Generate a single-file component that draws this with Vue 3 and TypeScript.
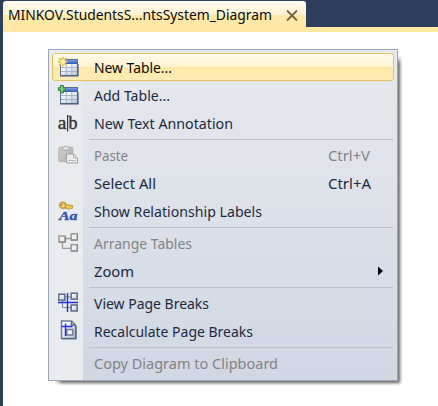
<script setup lang="ts">
type Icon = 'new' | 'add' | 'text' | 'paste' | 'labels' | 'arrange' | 'breaks' | 'recalc'
interface Item {
  label: string
  icon?: Icon
  shortcut?: string
  disabled?: boolean
  active?: boolean
  submenu?: boolean
  width: number
}

const groups: Item[][] = [
  [
    { label: 'New Table...', icon: 'new', active: true, width: 78 },
    { label: 'Add Table...', icon: 'add', width: 76 },
    { label: 'New Text Annotation', icon: 'text', width: 139 },
  ],
  [
    { label: 'Paste', icon: 'paste', shortcut: 'Ctrl+V', disabled: true, width: 34 },
    { label: 'Select All', shortcut: 'Ctrl+A', width: 62 },
    { label: 'Show Relationship Labels', icon: 'labels', width: 168 },
  ],
  [
    { label: 'Arrange Tables', icon: 'arrange', disabled: true, width: 98 },
    { label: 'Zoom', submenu: true, width: 40 },
  ],
  [
    { label: 'View Page Breaks', icon: 'breaks', width: 115 },
    { label: 'Recalculate Page Breaks', icon: 'recalc', width: 159 },
  ],
  [{ label: 'Copy Diagram to Clipboard', disabled: true, width: 184 }],
]
</script>

<template>
  <div class="window">
    <header class="tabs">
      <div class="tab">
        <svg class="title" width="268" height="26">
          <text x="0" y="19" textLength="264" lengthAdjust="spacingAndGlyphs">MINKOV.StudentsS...ntsSystem_Diagram</text>
        </svg>
        <svg class="close" width="12" height="11" viewBox="0 0 12 11">
          <path d="M1 .5 11 10.5M11 .5 1 10.5" stroke="#75633d" stroke-width="1.9" />
        </svg>
      </div>
    </header>
    <main class="canvas">
      <svg class="defs" width="0" height="0">
        <defs>
          <linearGradient id="cell" x1="0" y1="0" x2="1" y2="1">
            <stop offset="0.2" stop-color="#fff" /><stop offset="1" stop-color="#b4c3da" />
          </linearGradient>
          <linearGradient id="head" x1="0" y1="0" x2="0" y2="1">
            <stop offset="0" stop-color="#7ba0ec" /><stop offset="1" stop-color="#3155b7" />
          </linearGradient>
          <linearGradient id="gray" x1="0" y1="0" x2="1" y2="1">
            <stop offset="0" stop-color="#d6d6d6" /><stop offset="1" stop-color="#a9a9a9" />
          </linearGradient>
        </defs>
      </svg>
      <div class="menu">
        <div v-for="(group, g) in groups" :key="g" class="group">
          <div
            v-for="item in group"
            :key="item.label"
            class="item"
            :class="{ active: item.active, disabled: item.disabled }"
          >
            <span class="icon">
              <svg v-if="item.icon" width="20" height="20" viewBox="0 0 20 20" fill="none">
                <template v-if="item.icon === 'new' || item.icon === 'add'">
                  <rect x="2.5" y="2.5" width="17" height="16" fill="#fff" stroke="#5b6c91" />
                  <rect x="3" y="3" width="16" height="4" fill="url(#head)" />
                  <rect x="3" y="7" width="16" height="11" fill="url(#cell)" />
                  <path d="M3 10.5h16M3 14.5h16M8.3 7v11M13.8 7v11" stroke="#a7b4cb" />
                  <path d="M2 19h18V7" stroke="#48587c" stroke-width="1.2" />
                  <template v-if="item.icon === 'new'">
                    <path d="M4.8 0v9.6M0 4.8h9.6M1.2 1.2l7.2 7.2M8.4 1.2 1.2 8.4" stroke="#e6bd4b" stroke-width="1.8" />
                    <circle cx="4.8" cy="4.8" r="2.5" fill="#fff1a6" />
                  </template>
                  <template v-else>
                    <path d="M2.5.5h3v2.2h2.2v3H5.5V8h-3V5.7H.4v-3h2.1z" fill="#65b96e" stroke="#358345" />
                    <path d="M4 1.5v5" stroke="#9ad49e" />
                  </template>
                </template>
                <template v-else-if="item.icon === 'text'">
                  <text class="ab" x="-.3" y="16" textLength="8.6" lengthAdjust="spacingAndGlyphs">a</text>
                  <path d="M9.6 2v16.5" stroke="#333" stroke-width="1.2" />
                  <text class="ab" x="10.5" y="16" textLength="9" lengthAdjust="spacingAndGlyphs">b</text>
                </template>
                <template v-else-if="item.icon === 'paste'">
                  <rect x=".8" y="2.2" width="14" height="14.5" rx="1" fill="url(#gray)" stroke="#b2b2b2" />
                  <path d="M4 5V3l2-.4Q7.7-.6 9.4 2.6l2.3.4v2z" fill="#ececec" stroke="#a5a5a5" />
                  <path d="M8.5 9h7l4 4v5h-11z" fill="#ededed" stroke="#a1a1a1" />
                  <path d="M15.5 9v4h4M10.5 15.5h7" stroke="#b2b2b2" />
                </template>
                <template v-else-if="item.icon === 'labels'">
                  <circle cx="4.8" cy="4.3" r="3" fill="#f9df82" stroke="#cda141" stroke-width="1.8" />
                  <path d="M7.5 3.5 14.8 4.6 14.2 7.6 12.4 7.2 11 8.6 9.7 7.4 7 7z" fill="#efc85a" stroke="#bf9339" />
                  <circle cx="3.8" cy="3.8" r="1" fill="#b88a34" />
                  <text class="aa" x="1" y="19" textLength="18.5" lengthAdjust="spacingAndGlyphs">Aa</text>
                </template>
                <template v-else-if="item.icon === 'arrange'">
                  <path d="M7 5.5h6M4.5 9v6.3H13" stroke="#9b9b9b" stroke-width="1.3" />
                  <g fill="#eee" stroke="#9a9a9a" stroke-width="1.5">
                    <rect x="1" y="3" width="6" height="6" />
                    <rect x="13.2" y=".8" width="6" height="6.2" />
                    <rect x="13.2" y="11.7" width="6" height="6.2" />
                  </g>
                  <path d="M1 9.2h6.4V3M13 7.2h6.5V.8M13 18.1h6.5v-6.4" stroke="#848484" />
                </template>
                <template v-else-if="item.icon === 'breaks'">
                  <path d="M7 4h6M4.5 8v6.5H13" stroke="#7f8a9d" />
                  <g fill="url(#cell)" stroke="#64738d" stroke-width="1.6">
                    <rect x=".8" y="1.2" width="6" height="6" />
                    <rect x="13.2" y=".2" width="6" height="6" />
                    <rect x="13.2" y="12" width="6" height="6" />
                  </g>
                  <path d="M0 9.5h20M9.5 0v19" stroke="#2429e6" stroke-width="1.4" />
                </template>
                <template v-else>
                  <path d="M3.5 0h10l4 4v13.5h-14z" fill="url(#cell)" stroke="#6d7d9a" stroke-width="1.5" />
                  <path d="M13.5 0v4h4M4 17.6h14V5" stroke="#526486" stroke-width="1.3" />
                  <rect x="8.7" y="8.5" width="6" height="5.5" fill="#f4f6fb" stroke="#72819b" stroke-width="1.6" />
                  <path d="M4 5.5h10.5M7.5 2.5V15" stroke="#2429e6" stroke-width="1.4" />
                </template>
              </svg>
            </span>
            <svg class="label" width="200" height="26">
              <text x="1" y="19" :textLength="item.width" lengthAdjust="spacingAndGlyphs">{{ item.label }}</text>
            </svg>
            <svg v-if="item.shortcut" class="shortcut" width="46" height="26">
              <text x="1" y="19" :textLength="item.shortcut === 'Ctrl+A' ? 43 : 42" lengthAdjust="spacingAndGlyphs">{{ item.shortcut }}</text>
            </svg>
            <svg v-if="item.submenu" class="arrow" width="5" height="10" viewBox="0 0 5 10">
              <path d="M0 .5 5 5 0 9.5z" fill="#000" />
            </svg>
          </div>
        </div>
      </div>
    </main>
  </div>
</template>

<style>
body { margin: 0; overflow: hidden; }
</style>

<style scoped>
.window {
  box-sizing: border-box;
  width: 438px;
  height: 406px;
  padding: 1px 0 0 3px;
  display: flex;
  flex-direction: column;
  background-color: #2b3c5b;
  background-image: radial-gradient(#304262 0.7px, transparent 1px), radial-gradient(#304262 0.7px, transparent 1px);
  background-size: 4px 4px;
  background-position: 0 0, 2px 2px;
  font-family: "Noto Sans", "Open Sans", sans-serif;
  font-size: 15.3px;
}
.tabs {
  height: 31px;
  box-sizing: border-box;
  border-bottom: 5px solid #ffe8a6;
}
.tab {
  display: flex;
  align-items: center;
  width: 303px;
  height: 26px;
  border-radius: 3px 3px 0 0;
  background: linear-gradient(#fffcf3 0, #fff3cf 14px, #ffe8a6 14px, #ffe8a6 100%);
}
.title { flex: none; margin-left: 5px; overflow: visible; fill: #0a0a0a; }
.close { flex: none; margin: 3px 0 0 10px; }
.canvas {
  flex: 1;
  padding: 17px 40px 0 45px;
  background: #fff;
}
.defs { display: block; }
.menu {
  box-sizing: border-box;
  width: 350px;
  height: 332px;
  padding: 3px;
  border: 1px solid #9ba7b7;
  background:
    linear-gradient(#e9ecee, #e9ecee) 0 0 / 34px 100% no-repeat,
    linear-gradient(#e7eaed 0, #dce1e9 50%, #d5dce5 75%, #d0d7e3 100%);
  box-shadow: 7px 7px 3px -5px rgba(0, 0, 0, 0.45), 5px 5px 3px -3px rgba(0, 0, 0, 0.25);
}
.group + .group {
  padding-top: 4px;
  background: linear-gradient(#bdc0c9, #bdc0c9) 37px 2px / 304px 1px no-repeat;
}
.item {
  box-sizing: border-box;
  display: flex;
  align-items: center;
  height: 28px;
  border: 1px solid transparent;
  border-radius: 3px;
  fill: #1b293e;
}
.item.active {
  border-color: #e5c365;
  background: linear-gradient(#fffbed 0, #fff3cf 13px, #ffe8a6 13px, #ffecb5 100%);
  fill: #0a0a0a;
}
.item.disabled { fill: #838383; }
.icon {
  display: flex;
  width: 20px;
  height: 20px;
  margin: 0 15px 0 5px;
}
.icon svg { overflow: visible; }
.label { flex: none; }
.label, .shortcut { overflow: visible; }
.shortcut { margin-left: 34px; }
.arrow { margin-left: 85px; }
.ab { font: 18px "Liberation Serif", serif; fill: #333; stroke: #333; stroke-width: 0.4px; }
.aa { font: italic bold 13px "Liberation Serif", serif; fill: #3454b5; stroke: #3454b5; stroke-width: 0.4px; }
</style>
